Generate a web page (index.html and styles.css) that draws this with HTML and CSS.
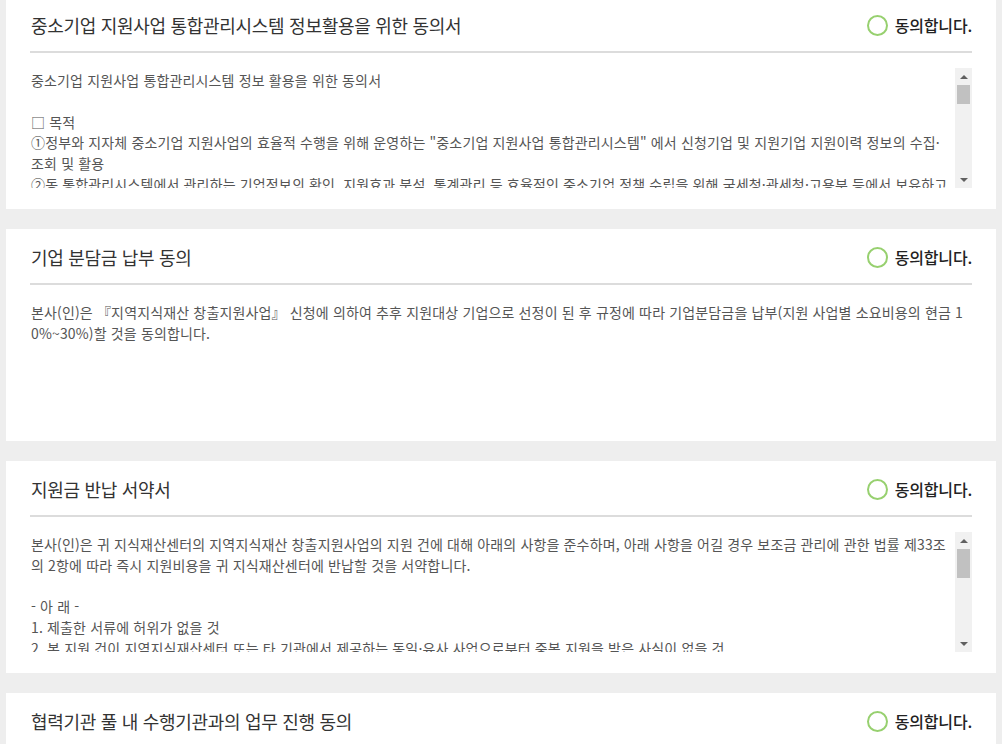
FILE: index.html
```html
<!DOCTYPE html>
<html lang="ko">
<head>
    <meta charset="UTF-8">
    <meta name="viewport" content="width=device-width, initial-scale=1.0">
    <title>동의서</title>
    <link rel="stylesheet" href="styles.css">
</head>
<body>

    <div class="agree-list">

        <section class="agree-card">
            <div class="agree-head">
                <h3 class="agree-title">중소기업 지원사업 통합관리시스템 정보활용을 위한 동의서</h3>
                <label class="agree-check"><input type="radio" name="agree1"><span class="circle"></span>동의합니다.</label>
            </div>
            <div class="agree-body">
                <div class="agree-text">
                    중소기업 지원사업 통합관리시스템 정보 활용을 위한 동의서<br>
                    <br>
                    □ 목적<br>
                    ①정부와 지자체 중소기업 지원사업의 효율적 수행을 위해 운영하는 "중소기업 지원사업 통합관리시스템" 에서 신청기업 및 지원기업 지원이력 정보의 수집·조회 및 활용<br>
                    ②동 통합관리시스템에서 관리하는 기업정보의 확인, 지원효과 분석, 통계관리 등 효율적인 중소기업 정책 수립을 위해 국세청·관세청·고용부 등에서 보유하고 있는 기업정보의 조회 및 활용<br>
                    <br>
                    □ 수집·조회 및 활용 항목<br>
                    ①기업 일반현황 : 기업명, 대표자명, 사업자등록번호, 법인등록번호, 주소, 전화번호, 업종, 설립일 등<br>
                    ②기업 재무정보 : 매출액, 영업이익, 당기순이익, 자산, 부채, 자본 등<br>
                    ③고용정보 : 상시근로자수, 고용보험 가입자수 등<br>
                    ④기타 : 수출실적, 지원사업 참여이력 등<br>
                    <br>
                    □ 보유 및 이용기간<br>
                    수집·조회된 정보는 동의일로부터 5년간 보유·이용하며, 보유기간 종료 후 지체 없이 파기합니다.<br>
                    <br>
                    □ 동의 거부 권리 및 불이익<br>
                    귀하는 위 정보의 수집·조회 및 활용에 대한 동의를 거부할 권리가 있으나, 동의를 거부할 경우 지원사업 신청 및 선정에 제한을 받을 수 있습니다.<br>
                    <br>
                    본인은 위 내용을 충분히 이해하였으며, 중소기업 지원사업 통합관리시스템 정보 활용에 동의합니다.
                </div>
                <div class="scrollbar">
                    <span class="sb-btn sb-up"></span>
                    <div class="sb-track"><span class="sb-thumb" style="height: 19px"></span></div>
                    <span class="sb-btn sb-down"></span>
                </div>
            </div>
        </section>

        <section class="agree-card">
            <div class="agree-head">
                <h3 class="agree-title">기업 분담금 납부 동의</h3>
                <label class="agree-check"><input type="radio" name="agree2"><span class="circle"></span>동의합니다.</label>
            </div>
            <div class="agree-body">
                <div class="agree-text">
                    본사(인)은 『지역지식재산 창출지원사업』 신청에 의하여 추후 지원대상 기업으로 선정이 된 후 규정에 따라 기업분담금을 납부(지원 사업별 소요비용의 현금 10%~30%)할 것을 동의합니다.
                </div>
            </div>
        </section>

        <section class="agree-card">
            <div class="agree-head">
                <h3 class="agree-title">지원금 반납 서약서</h3>
                <label class="agree-check"><input type="radio" name="agree3"><span class="circle"></span>동의합니다.</label>
            </div>
            <div class="agree-body">
                <div class="agree-text">
                    본사(인)은 귀 지식재산센터의 지역지식재산 창출지원사업의 지원 건에 대해 아래의 사항을 준수하며, 아래 사항을 어길 경우 보조금 관리에 관한 법률 제33조의 2항에 따라 즉시 지원비용을 귀 지식재산센터에 반납할 것을 서약합니다.<br>
                    <br>
                    - 아 래 -<br>
                    1. 제출한 서류에 허위가 없을 것<br>
                    2. 본 지원 건이 지역지식재산센터 또는 타 기관에서 제공하는 동일·유사 사업으로부터 중복 지원을 받은 사실이 없을 것<br>
                    3. 지원 사업의 목적 외 용도로 지원금을 사용하지 않을 것<br>
                    4. 정당한 사유 없이 협약을 해지하거나 사업을 중도에 포기하지 않을 것<br>
                    5. 기업분담금을 기한 내에 납부할 것<br>
                    <br>
                    위 사항을 위반하여 지원이 취소된 경우, 본사(인)은 귀 센터가 지급한 지원비용 전액을 반납하며 향후 지원사업 참여 제한 등의 불이익을 감수할 것을 서약합니다.
                </div>
                <div class="scrollbar">
                    <span class="sb-btn sb-up"></span>
                    <div class="sb-track"><span class="sb-thumb" style="height: 29px"></span></div>
                    <span class="sb-btn sb-down"></span>
                </div>
            </div>
        </section>

        <section class="agree-card">
            <div class="agree-head">
                <h3 class="agree-title">협력기관 풀 내 수행기관과의 업무 진행 동의</h3>
                <label class="agree-check"><input type="radio" name="agree4"><span class="circle"></span>동의합니다.</label>
            </div>
            <div class="agree-body">
                <div class="agree-text">
                    본사(인)은 지역지식재산센터 협력기관 풀에 등록된 수행기관과 지원사업의 업무를 진행하는 것에 동의합니다.
                </div>
            </div>
        </section>

    </div>

</body>
</html>
```

FILE: styles.css
```css
html, body {
    overflow: hidden;
}

body {
    margin: 0;
    background-color: #eeeeee;
    font-family: "Noto Sans CJK KR", "Noto Sans", sans-serif;
    color: #333;
}

.agree-list {
    display: flex;
    flex-direction: column;
    gap: 20px;
    padding: 0 6px;
    margin-top: -3px; /* page is scrolled a little */
}

.agree-card {
    background-color: #fff;
    padding: 0 24px 21px;
}

.agree-head {
    display: flex;
    justify-content: space-between;
    align-items: center;
    height: 36px;
    padding: 10px 0 8px;
    border-bottom: 2px solid #dcdcdc;
}

.agree-title {
    margin: 0;
    padding-left: 1px;
    font-size: 18px;
    font-weight: normal;
    letter-spacing: -0.3px;
    color: #333;
}

.agree-check {
    display: flex;
    align-items: center;
    gap: 7px;
    font-size: 16px;
    font-weight: 500;
    letter-spacing: -0.2px;
    color: #222;
    cursor: pointer;
}

.agree-check input {
    display: none;
}

.circle {
    width: 17px;
    height: 17px;
    border: 2px solid #97d06f;
    border-radius: 50%;
}

.agree-check input:checked + .circle {
    background-color: #97d06f;
}

.agree-body {
    display: flex;
    height: 120px;
    margin-top: 15px;
}

.agree-text {
    flex: 1;
    overflow: hidden;
    padding: 2px 3px 0 1px;
    font-size: 14px;
    line-height: 20.8px;
    letter-spacing: 0.15px;
    color: #555;
    word-break: break-all;
}

/* scrollbar drawn by hand, the old windows look */
.scrollbar {
    width: 17px;
    display: flex;
    flex-direction: column;
    background-color: #f1f1f1;
}

.sb-btn {
    height: 17px;
    display: flex;
    justify-content: center;
    align-items: center;
}

.sb-up::after,
.sb-down::after {
    content: "";
    border-left: 4px solid transparent;
    border-right: 4px solid transparent;
}

.sb-up::after {
    border-bottom: 4px solid #606060;
}

.sb-down::after {
    border-top: 4px solid #606060;
}

.sb-track {
    flex: 1;
    padding: 0 2px;
}

.sb-thumb {
    display: block;
    background-color: #c1c1c1;
}
```
